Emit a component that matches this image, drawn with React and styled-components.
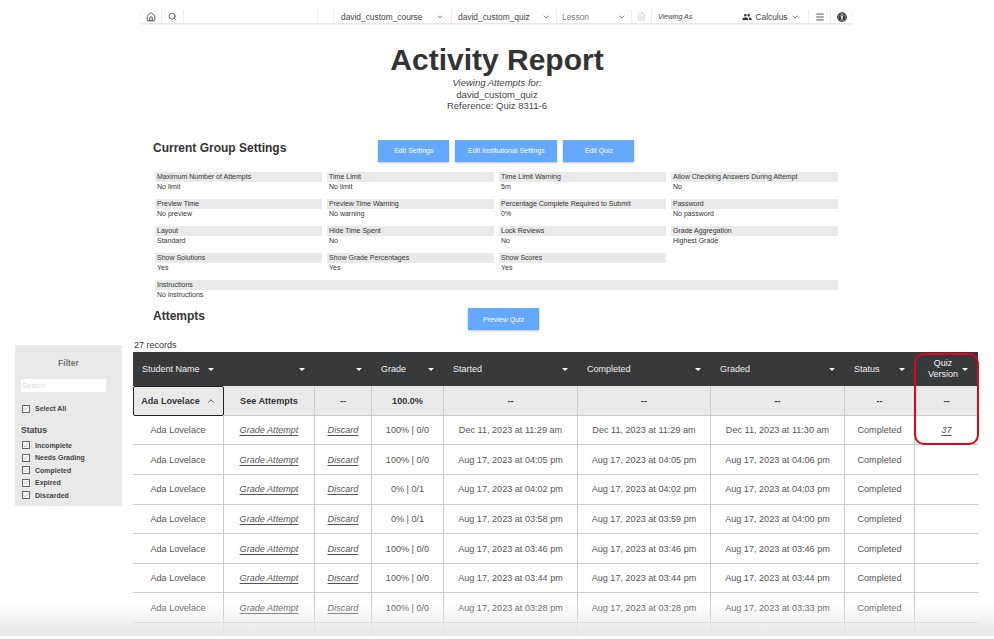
import React from "react";
import styled, { createGlobalStyle } from "styled-components";
import { House, Search, ChevronDown, ChevronUp, Check, FileText, Menu } from "lucide-react";
import { MdPeople } from "react-icons/md";
import { FaUniversalAccess } from "react-icons/fa";

const GlobalStyle = createGlobalStyle`
  html, body {
    margin: 0;
    padding: 0;
    background: #fff;
    font-family: "Liberation Sans", Arial, sans-serif;
    color: #333;
  }
  * { box-sizing: border-box; }
`;

const Page = styled.div`
  position: relative;
  width: 994px;
  height: 639px;
  overflow: hidden;
  padding-top: 10px;
`;

const Nav = styled.nav`
  display: flex;
  align-items: center;
  width: 711px;
  height: 13px;
  margin-left: 141px;
  background: #fff;
  box-shadow: 0 1px 2px rgba(0, 0, 0, 0.14);
  font-size: 8.4px;
  color: #444;
`;
const NavCell = styled.div`
  display: flex;
  align-items: center;
  justify-content: ${(p) => p.$justify || "center"};
  flex: ${(p) => (p.$grow ? "1" : `0 0 ${p.$w}px`)};
  height: 13px;
  padding: ${(p) => (p.$pad ? `0 ${p.$pad}px` : "0")};
  border-right: ${(p) => (p.$plain ? "none" : "1px solid #ececec")};
  color: ${(p) => (p.$muted ? "#777" : "#444")};
  font-style: ${(p) => (p.$italic ? "italic" : "normal")};
  font-size: ${(p) => (p.$italic ? "7px" : "inherit")};
  gap: 3px;
`;

const TitleBlock = styled.header`
  margin-top: 19px;
  text-align: center;
  padding-left: 0;
`;
const Title = styled.h1`
  margin: 0;
  font-size: 30px;
  line-height: 35px;
  font-weight: 700;
  color: #333;
`;
const Sub = styled.div`
  font-size: 9.5px;
  line-height: 11.5px;
  color: #444;
  font-style: ${(p) => (p.$italic ? "italic" : "normal")};
`;

const Section = styled.section`
  width: 711px;
  margin-left: 141px;
  padding: 0 14px 0 12px;
`;
const SettingsTop = styled.div`
  display: flex;
  align-items: flex-start;
  margin-top: 29px;
`;
const Heading = styled.h2`
  margin: 0;
  font-size: 12px;
  line-height: 14px;
  font-weight: 700;
  color: #333;
`;
const Buttons = styled.div`
  display: flex;
  gap: 6px;
  margin-left: 92px;
  margin-top: -1px;
`;
const Button = styled.button`
  width: ${(p) => p.$w}px;
  height: 22px;
  padding: 0;
  border: none;
  background: #64a8ff;
  color: #fff;
  font-family: inherit;
  font-size: 7px;
  box-shadow: 0 1px 2px rgba(0, 0, 0, 0.25);
`;
const SettingsGrid = styled.div`
  display: grid;
  grid-template-columns: repeat(4, 167px);
  column-gap: 5px;
  row-gap: 7.7px;
  margin: 10px 0 0 2px;
  font-size: 7px;
  line-height: 9.5px;
  color: #333;
`;
const Setting = styled.div`
  grid-column: ${(p) => (p.$wide ? "1 / -1" : "auto")};
`;
const SettingLabel = styled.div`
  height: 10px;
  padding-left: 2px;
  background: #e9e9e9;
`;
const SettingValue = styled.div`
  padding-left: 2px;
`;
const AttemptsTop = styled.div`
  display: flex;
  align-items: flex-start;
  margin-top: 9px;
`;
const PreviewButtonWrap = styled.div`
  margin-left: 263px;
  margin-top: -1px;
`;

const Lower = styled.div`
  display: flex;
  align-items: flex-start;
  margin-top: 9px;
  padding-left: 15px;
`;
const Filter = styled.aside`
  flex: 0 0 107px;
  height: 161px;
  margin-top: 6px;
  padding: 12px 6px 0;
  background: #e9e9e9;
  font-size: 7px;
  color: #444;
`;
const FilterTitle = styled.div`
  text-align: center;
  font-size: 8.5px;
  font-weight: 700;
  color: #777;
  line-height: 12px;
`;
const FilterSearch = styled.input`
  display: block;
  width: 85px;
  height: 13px;
  margin: 10px 0 10px;
  padding: 0 1px;
  border: none;
  background: #fff;
  font-family: inherit;
  font-size: 7.5px;
  &::placeholder { color: #ddd; }
`;
const StatusTitle = styled.div`
  margin: 10px 0 3px;
  font-size: 8.5px;
  font-weight: 700;
  line-height: 11px;
  color: #444;
`;
const CheckRow = styled.label`
  display: flex;
  align-items: center;
  gap: 5px;
  height: 12.5px;
  padding-left: 1px;
  font-weight: 700;
  color: #444;
`;
const Box = styled.span`
  display: flex;
  align-items: center;
  justify-content: center;
  width: 8px;
  height: 8px;
  border: 1px solid #666;
  background: #f5f5f5;
  color: #777;
`;

const TableArea = styled.div`
  position: relative;
  flex: 0 0 845px;
  margin-left: 11px;
`;
const Records = styled.div`
  height: 13px;
  padding-left: 1px;
  font-size: 9px;
  line-height: 13px;
  color: #333;
`;
const columns = "91px 91px 57px 72px 134px 133px 134px 70px 63px";
const HeaderRow = styled.div`
  display: grid;
  grid-template-columns: ${columns};
  height: 34px;
  background: #38393b;
  color: #f2f2f2;
  font-size: 9px;
`;
const HeaderCell = styled.div`
  display: flex;
  align-items: center;
  justify-content: space-between;
  padding: 0 10px 0 9px;
  line-height: 11px;
`;
const StackedLabel = styled.span`
  flex: 1;
  text-align: center;
`;
const Caret = styled.span`
  flex: none;
  width: 0;
  height: 0;
  border-left: 3px solid transparent;
  border-right: 3px solid transparent;
  border-top: 3px solid #fff;
`;
const Row = styled.div`
  display: grid;
  grid-template-columns: ${columns};
  height: 29.6px;
  background: ${(p) => (p.$summary ? "#e9e9e9" : "#fff")};
  font-size: 9.1px;
  color: ${(p) => (p.$summary ? "#333" : "#555")};
  font-weight: ${(p) => (p.$summary ? 700 : 400)};
`;
const Cell = styled.div`
  display: flex;
  align-items: center;
  justify-content: center;
  border-bottom: 1px solid #ccc;
  border-right: ${(p) => (p.$last ? "none" : "1px solid #ccc")};
  white-space: nowrap;
`;
const NameToggle = styled(Cell)`
  gap: 6px;
  border: 1px solid #222;
  border-radius: 2px;
  color: #333;
`;
const RowLink = styled.a`
  color: #555;
  font-style: italic;
  text-decoration: underline;
  text-underline-offset: 2px;
`;
const Highlight = styled.div`
  position: absolute;
  left: 781px;
  top: 14px;
  width: 65px;
  height: 92px;
  border: 2px solid #e8001f;
  border-radius: 10px;
`;
const BottomFade = styled.div`
  position: absolute;
  left: 0;
  right: 0;
  bottom: 0;
  height: 36px;
  background: linear-gradient(to bottom, rgba(232, 232, 232, 0), rgba(232, 232, 232, 0.95) 90%);
  border-bottom: 3px solid #fff;
`;

const groupSettings = [
  ["Maximum Number of Attempts", "No limit"],
  ["Time Limit", "No limit"],
  ["Time Limit Warning", "5m"],
  ["Allow Checking Answers During Attempt", "No"],
  ["Preview Time", "No preview"],
  ["Preview Time Warning", "No warning"],
  ["Percentage Complete Required to Submit", "0%"],
  ["Password", "No password"],
  ["Layout", "Standard"],
  ["Hide Time Spent", "No"],
  ["Lock Reviews", "No"],
  ["Grade Aggregation", "Highest Grade"],
  ["Show Solutions", "Yes"],
  ["Show Grade Percentages", "Yes"],
  ["Show Scores", "Yes"],
];

const statuses = ["Incomplete", "Needs Grading", "Completed", "Expired", "Discarded"];

const headers = ["Student Name", "", "", "Grade", "Started", "Completed", "Graded", "Status"];

const attempts = [
  ["100% | 0/0", "Dec 11, 2023 at 11:29 am", "Dec 11, 2023 at 11:29 am", "Dec 11, 2023 at 11:30 am", "37"],
  ["100% | 0/0", "Aug 17, 2023 at 04:05 pm", "Aug 17, 2023 at 04:05 pm", "Aug 17, 2023 at 04:06 pm"],
  ["0% | 0/1", "Aug 17, 2023 at 04:02 pm", "Aug 17, 2023 at 04:02 pm", "Aug 17, 2023 at 04:03 pm"],
  ["0% | 0/1", "Aug 17, 2023 at 03:58 pm", "Aug 17, 2023 at 03:59 pm", "Aug 17, 2023 at 04:00 pm"],
  ["100% | 0/0", "Aug 17, 2023 at 03:46 pm", "Aug 17, 2023 at 03:46 pm", "Aug 17, 2023 at 03:46 pm"],
  ["100% | 0/0", "Aug 17, 2023 at 03:44 pm", "Aug 17, 2023 at 03:44 pm", "Aug 17, 2023 at 03:44 pm"],
  ["100% | 0/0", "Aug 17, 2023 at 03:28 pm", "Aug 17, 2023 at 03:28 pm", "Aug 17, 2023 at 03:33 pm"],
];

const FilterCheck = ({ label }) => (
  <CheckRow>
    <Box>
      <Check size={7} strokeWidth={1.5} />
    </Box>
    {label}
  </CheckRow>
);

const App = () => {
  return (
    <Page>
      <GlobalStyle />
      <Nav>
        <NavCell $w={21}><House size={10} color="#333" /></NavCell>
        <NavCell $w={22}><Search size={9} color="#333" /></NavCell>
        <NavCell $w={134} />
        <NavCell $w={16} />
        <NavCell $w={118} $justify="space-between" $pad={7}>david_custom_course<ChevronDown size={8} /></NavCell>
        <NavCell $w={105} $justify="space-between" $pad={6}>david_custom_quiz<ChevronDown size={8} /></NavCell>
        <NavCell $w={75} $justify="space-between" $pad={5} $muted>Lesson<ChevronDown size={8} color="#444" /></NavCell>
        <NavCell $w={20}><FileText size={9} color="#ccc" /></NavCell>
        <NavCell $grow $plain $justify="flex-start" $pad={6} $italic>Viewing As</NavCell>
        <NavCell $w={76} $justify="center"><MdPeople size={10} color="#333" />Calculus<ChevronDown size={8} /></NavCell>
        <NavCell $w={22}><Menu size={10} color="#333" /></NavCell>
        <NavCell $w={21} $plain><FaUniversalAccess size={10} color="#333" /></NavCell>
      </Nav>

      <TitleBlock>
        <Title>Activity Report</Title>
        <Sub $italic>Viewing Attempts for:</Sub>
        <Sub>david_custom_quiz</Sub>
        <Sub>Reference: Quiz 8311-6</Sub>
      </TitleBlock>

      <Section>
        <SettingsTop>
          <Heading>Current Group Settings</Heading>
          <Buttons>
            <Button $w={71}>Edit Settings</Button>
            <Button $w={102}>Edit Institutional Settings</Button>
            <Button $w={71}>Edit Quiz</Button>
          </Buttons>
        </SettingsTop>
        <SettingsGrid>
          {groupSettings.map(([label, value]) => (
            <Setting key={label}>
              <SettingLabel>{label}</SettingLabel>
              <SettingValue>{value}</SettingValue>
            </Setting>
          ))}
          <Setting $wide>
            <SettingLabel>Instructions</SettingLabel>
            <SettingValue>No instructions</SettingValue>
          </Setting>
        </SettingsGrid>
        <AttemptsTop>
          <Heading>Attempts</Heading>
          <PreviewButtonWrap>
            <Button $w={71}>Preview Quiz</Button>
          </PreviewButtonWrap>
        </AttemptsTop>
      </Section>

      <Lower>
        <Filter>
          <FilterTitle>Filter</FilterTitle>
          <FilterSearch placeholder="Search" />
          <FilterCheck label="Select All" />
          <StatusTitle>Status</StatusTitle>
          {statuses.map((s) => (
            <FilterCheck key={s} label={s} />
          ))}
        </Filter>

        <TableArea>
          <Records>27 records</Records>
          <HeaderRow>
            {headers.map((h, i) => (
              <HeaderCell key={i}>
                {h && <span>{h}</span>}
                {!h && <span />}
                <Caret />
              </HeaderCell>
            ))}
            <HeaderCell>
              <StackedLabel>Quiz<br />Version</StackedLabel>
              <Caret />
            </HeaderCell>
          </HeaderRow>
          <Row $summary>
            <NameToggle>Ada Lovelace<ChevronUp size={10} /></NameToggle>
            <Cell>See Attempts</Cell>
            <Cell>--</Cell>
            <Cell>100.0%</Cell>
            <Cell>--</Cell>
            <Cell>--</Cell>
            <Cell>--</Cell>
            <Cell>--</Cell>
            <Cell $last>--</Cell>
          </Row>
          {attempts.map(([grade, started, completed, graded, version], i) => (
            <Row key={i}>
              <Cell>Ada Lovelace</Cell>
              <Cell><RowLink>Grade Attempt</RowLink></Cell>
              <Cell><RowLink>Discard</RowLink></Cell>
              <Cell>{grade}</Cell>
              <Cell>{started}</Cell>
              <Cell>{completed}</Cell>
              <Cell>{graded}</Cell>
              <Cell>Completed</Cell>
              <Cell $last>{version && <RowLink>{version}</RowLink>}</Cell>
            </Row>
          ))}
          <Row>
            <Cell /><Cell /><Cell /><Cell /><Cell /><Cell /><Cell /><Cell /><Cell $last />
          </Row>
          <Highlight />
        </TableArea>
      </Lower>
      <BottomFade />
    </Page>
  );
};

export default App;
